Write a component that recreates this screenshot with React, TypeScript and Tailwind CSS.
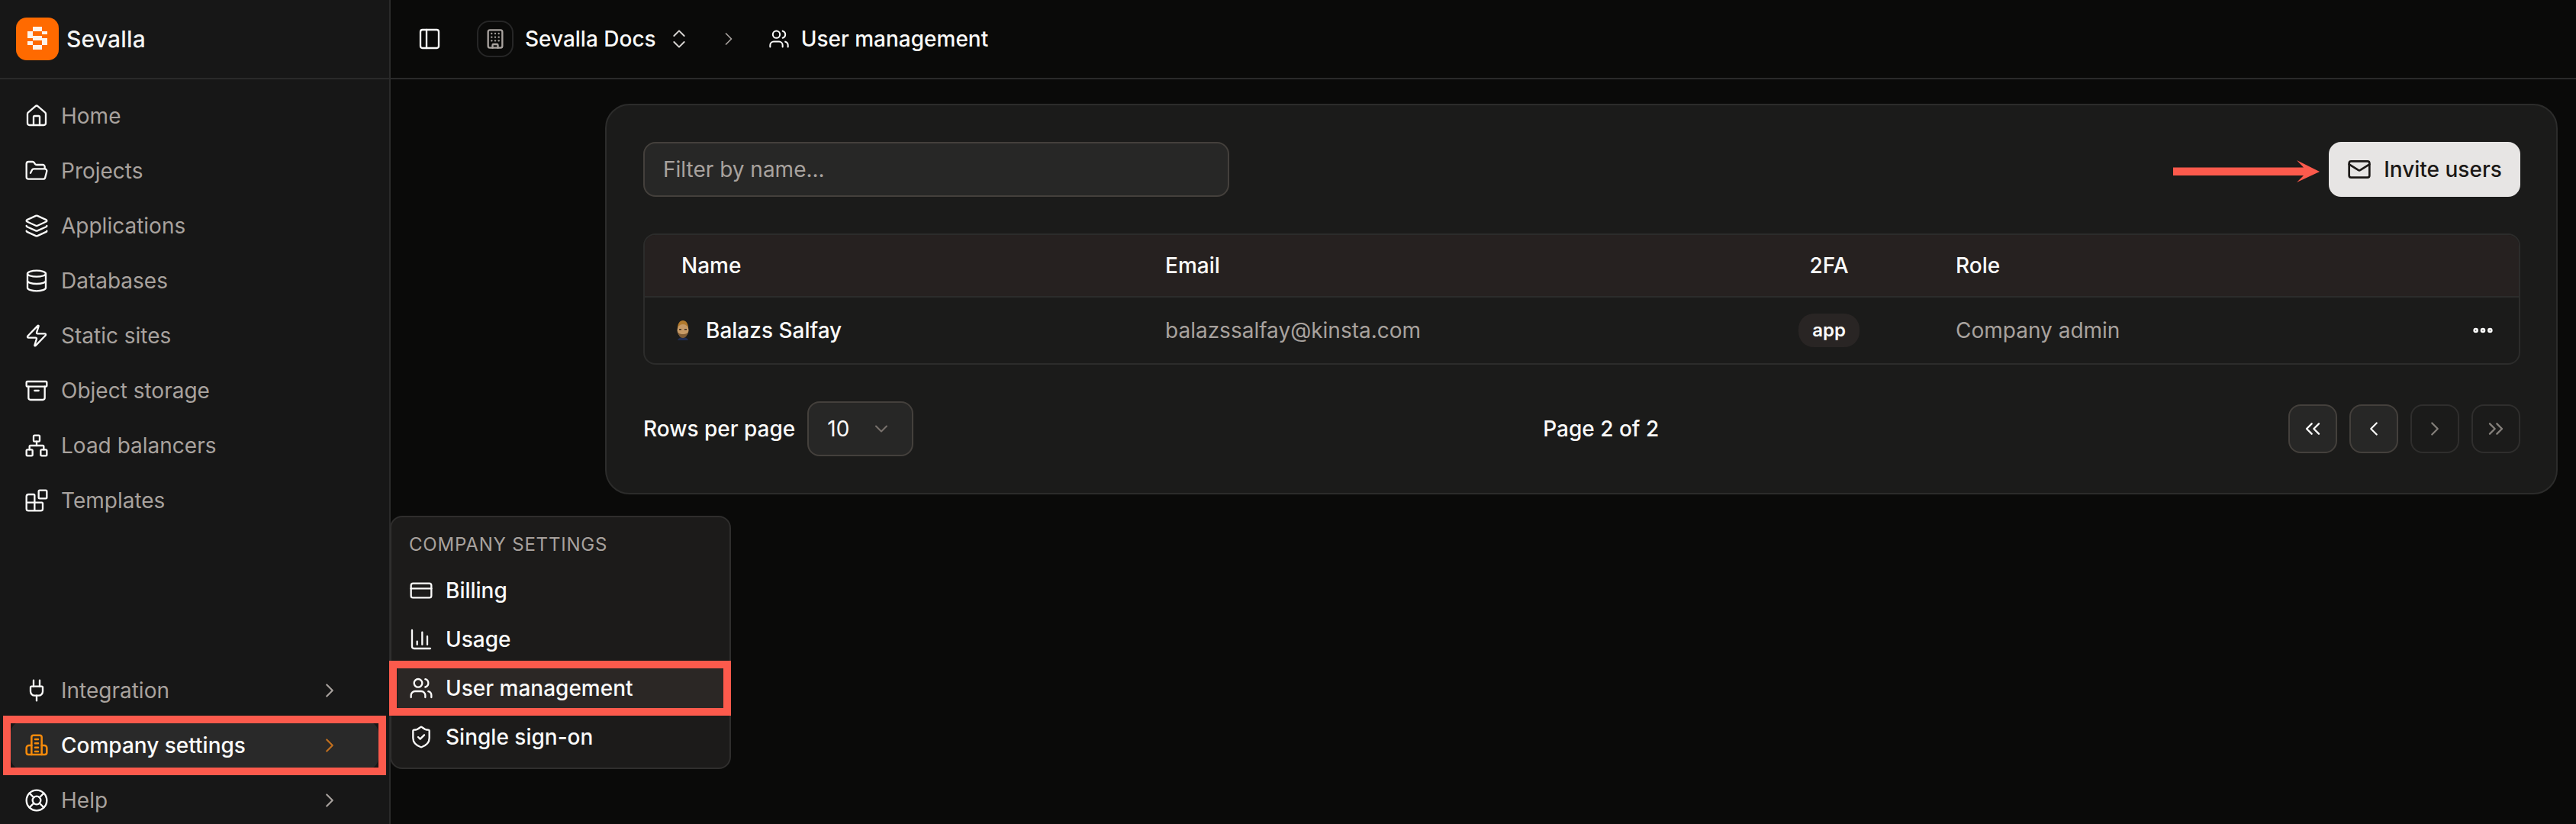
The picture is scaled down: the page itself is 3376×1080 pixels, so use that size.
import {
  Archive,
  Blocks,
  Building,
  ChartColumn,
  ChevronDown,
  ChevronLeft,
  ChevronRight,
  ChevronsLeft,
  ChevronsRight,
  ChevronsUpDown,
  CreditCard,
  Database,
  Ellipsis,
  FolderOpen,
  House,
  Layers,
  LifeBuoy,
  Mail,
  Network,
  PanelLeft,
  Plug,
  ShieldCheck,
  Users,
  Zap,
} from "lucide-react"

const mainNav = [
  { label: "Home", icon: House },
  { label: "Projects", icon: FolderOpen },
  { label: "Applications", icon: Layers },
  { label: "Databases", icon: Database },
  { label: "Static sites", icon: Zap },
  { label: "Object storage", icon: Archive },
  { label: "Load balancers", icon: Network },
  { label: "Templates", icon: Blocks },
]

const settingsMenu = [
  { label: "Billing", icon: CreditCard },
  { label: "Usage", icon: ChartColumn },
  { label: "User management", icon: Users, active: true },
  { label: "Single sign-on", icon: ShieldCheck },
]

function SevallaLogo() {
  return (
    <div className="flex h-[56px] w-[56px] items-center justify-center rounded-[14px] bg-[#ff6a00]">
      <svg width="56" height="56" viewBox="0 0 56 56" fill="#fdf3ea">
        <rect x="22" y="12" width="12" height="6" />
        <rect x="15" y="18" width="7" height="6" />
        <rect x="34" y="18" width="7" height="4" />
        <rect x="15" y="24" width="19" height="3" />
        <rect x="22" y="27" width="19" height="3" />
        <rect x="34" y="30" width="7" height="6" />
        <rect x="15" y="31" width="7" height="5" />
        <rect x="22" y="36" width="12" height="6" />
      </svg>
    </div>
  )
}

function CompanyIcon() {
  return (
    <svg width="32" height="32" viewBox="0 0 24 24" fill="none" stroke="#f58a0b" strokeWidth="1.9" strokeLinecap="round" strokeLinejoin="round">
      <path d="M7 21V4a2 2 0 0 1 2-2h6a2 2 0 0 1 2 2v17" />
      <path d="M7 12H4.5A2.5 2.5 0 0 0 2 14.5V19a2 2 0 0 0 2 2h16a2 2 0 0 0 2-2v-4.5a2.5 2.5 0 0 0-2.5-2.5H17" />
      <path d="M10.5 6h3M10.5 10h3M10.5 14h3M10.5 18h3" />
    </svg>
  )
}

function Avatar() {
  return (
    <svg width="22" height="28" viewBox="0 0 22 28">
      <path d="M4 27c1-3 4-4 7-4s6 1 7 4z" fill="#1e2c52" />
      <path d="M4 11c0-6 3-10 7-10s7 4 7 10z" fill="#b27a2c" />
      <ellipse cx="11" cy="14" rx="7.5" ry="8" fill="#c69a66" />
      <path d="M4 15c1 5 3 9 7 9s6-4 7-9c-1 3-3 4-7 4s-6-1-7-4z" fill="#7f5c35" />
      <rect x="6" y="12" width="3" height="1.5" fill="#3a2a1c" />
      <rect x="13" y="12" width="3" height="1.5" fill="#3a2a1c" />
    </svg>
  )
}

function Sidebar() {
  return (
    <aside className="flex w-[512px] shrink-0 flex-col border-r-2 border-[#2a2a2a] bg-[#171717]">
      <div className="flex h-[104px] shrink-0 items-center gap-[10px] border-b-2 border-[#2a2a2a] pl-[21px]">
        <SevallaLogo />
        <span className="text-[30px] font-medium tracking-[0.2px] text-[#f5f5f4]">Sevalla</span>
      </div>

      <nav className="flex flex-col gap-[8px] px-[14px] pt-[16px]">
        {mainNav.map((item) => (
          <div key={item.label} className="flex h-[64px] items-center gap-[16px] pl-[18px] text-[28px] text-[#a8a29e]">
            <item.icon size={32} strokeWidth={1.75} className="text-[#fafaf9]" />
            {item.label}
          </div>
        ))}
      </nav>

      <div className="mt-[185px] flex flex-col gap-[8px] px-[14px]">
        <div className="flex h-[64px] items-center gap-[16px] pl-[18px] text-[28px] text-[#a8a29e]">
          <Plug size={32} strokeWidth={1.75} className="text-[#fafaf9]" />
          Integration
          <ChevronRight size={30} strokeWidth={1.75} className="ml-auto mr-[49px] text-[#a8a29e]" />
        </div>

        <div className="relative flex h-[64px] items-center gap-[16px] rounded-[16px] bg-[#292929] pl-[18px] text-[28px] font-medium text-[#fafaf9]">
          <CompanyIcon />
          Company settings
          <ChevronRight size={30} strokeWidth={1.75} className="ml-auto mr-[49px] text-[#c2701f]" />
          {/* annotation around the item */}
          <div className="absolute -bottom-[7px] -left-[10px] -right-[10px] -top-[7px] border-[10px] border-[#fc5a4c]" />
        </div>

        <div className="flex h-[64px] items-center gap-[16px] pl-[18px] text-[28px] text-[#a8a29e]">
          <LifeBuoy size={32} strokeWidth={1.75} className="text-[#fafaf9]" />
          Help
          <ChevronRight size={30} strokeWidth={1.75} className="ml-auto mr-[49px] text-[#a8a29e]" />
        </div>
      </div>
    </aside>
  )
}

function TopBar() {
  return (
    <header className="flex h-[104px] shrink-0 items-center border-b-2 border-[#2a2a2a] pl-[35px] text-[28px] font-medium text-[#fafaf9]">
      <PanelLeft size={32} strokeWidth={1.75} />
      <div className="ml-[46px] flex h-[48px] w-[48px] items-center justify-center rounded-[16px] border-2 border-[#262626]">
        <Building size={28} strokeWidth={2} className="text-[#a8a29e]" />
      </div>
      <span className="ml-[15px]">Sevalla Docs</span>
      <ChevronsUpDown size={32} strokeWidth={1.5} className="ml-[14px] text-[#d6d3d1]" />
      <ChevronRight size={28} strokeWidth={1.5} className="ml-[35px] text-[#a8a29e]" />
      <Users size={28} strokeWidth={1.75} className="ml-[38px]" />
      <span className="ml-[15px]">User management</span>
    </header>
  )
}

const rowGrid = "grid grid-cols-[682px_830px_80px_1fr_84px] items-center"

function UsersCard() {
  return (
    <section className="rounded-[32px] border-2 border-[#2c2c2b] bg-[#1b1b1a] py-[48px] pl-[48px] pr-[47px]">
      <div className="flex items-center justify-between">
        <div className="flex h-[72px] w-[768px] items-center rounded-[16px] border-2 border-[#44403c] bg-[#272726] pl-[24px] text-[28px] text-[#a8a29e]">
          Filter by name...
        </div>
        <div className="flex items-center gap-[12px]">
          <svg width="192" height="30" viewBox="0 0 192 30" className="mt-[6px]" fill="#fc5a4c">
            <path d="M0 9.5H171L162 0L192 15L162 29L171 20H0Z" />
          </svg>
          <button className="flex h-[72px] w-[251px] items-center justify-center gap-[16px] rounded-[16px] bg-[#e7e5e4] text-[28px] font-medium text-[#1c1917]">
            <Mail size={32} strokeWidth={2} />
            Invite users
          </button>
        </div>
      </div>

      <div className="mt-[48px] overflow-hidden rounded-[16px] border-2 border-[#2c2c2b] text-[28px]">
        <div className={`${rowGrid} h-[82px] border-b-2 border-[#2c2c2b] bg-[#262120] font-medium text-[#fafaf9]`}>
          <div className="pl-[48px]">Name</div>
          <div>Email</div>
          <div className="text-center">2FA</div>
          <div className="pl-[126px]">Role</div>
          <div />
        </div>
        <div className={`${rowGrid} h-[86px]`}>
          <div className="flex items-center gap-[19px] pl-[39px] font-medium text-[#fafaf9]">
            <Avatar />
            Balazs Salfay
          </div>
          <div className="text-[#a8a29e]">balazssalfay@kinsta.com</div>
          <div className="flex h-[44px] items-center justify-center rounded-[20px] bg-[#292524] text-[24px] font-semibold text-[#fafaf9]">
            app
          </div>
          <div className="pl-[126px] text-[#a8a29e]">Company admin</div>
          <div className="flex justify-end pr-[31px] text-[#fafaf9]">
            <Ellipsis size={32} strokeWidth={3} />
          </div>
        </div>
      </div>

      <div className="mt-[48px] flex items-center justify-between text-[28px] font-medium text-[#fafaf9]">
        <div className="flex items-center gap-[16px]">
          Rows per page
          <div className="flex h-[72px] w-[139px] items-center rounded-[16px] border-2 border-[#44403c] bg-[#272726] pl-[24px]">
            <span className="font-normal">10</span>
            <ChevronDown size={28} strokeWidth={1.75} className="ml-[28px] text-[#78716c]" />
          </div>
        </div>
        <div>Page 2 of 2</div>
        <div className="flex gap-[16px]">
          <div className="flex h-[64px] w-[64px] items-center justify-center rounded-[16px] border-2 border-[#44403c] bg-[#272726]">
            <ChevronsLeft size={32} strokeWidth={1.75} />
          </div>
          <div className="flex h-[64px] w-[64px] items-center justify-center rounded-[16px] border-2 border-[#44403c] bg-[#272726]">
            <ChevronLeft size={30} strokeWidth={1.75} />
          </div>
          <div className="flex h-[64px] w-[64px] items-center justify-center rounded-[16px] border-2 border-[#2f2e2d] text-[#85807b]">
            <ChevronRight size={30} strokeWidth={1.75} />
          </div>
          <div className="flex h-[64px] w-[64px] items-center justify-center rounded-[16px] border-2 border-[#2f2e2d] text-[#85807b]">
            <ChevronsRight size={32} strokeWidth={1.75} />
          </div>
        </div>
      </div>
    </section>
  )
}

function SettingsPopup() {
  return (
    <div className="absolute left-[511px] top-[676px] w-[447px] rounded-[16px] border-2 border-[#2f2e2d] bg-[#1c1b1a] p-[8px]">
      <div className="flex h-[56px] items-center pl-[15px] text-[24px] tracking-[0.8px] text-[#a8a29e]">COMPANY SETTINGS</div>
      {settingsMenu.map((item) => (
        <div
          key={item.label}
          className={`relative flex h-[64px] items-center gap-[16px] pl-[15px] text-[28px] font-medium text-[#fafaf9] ${item.active ? "bg-[#2b2725]" : ""}`}
        >
          <item.icon size={32} strokeWidth={1.75} />
          {item.label}
          {item.active && (
            <div className="absolute -bottom-[4px] -left-[11px] -right-[10px] -top-[4px] border-[10px] border-[#fc5a4c]" />
          )}
        </div>
      ))}
    </div>
  )
}

export default function App() {
  return (
    <div className="relative flex h-[1080px] w-[3376px] overflow-hidden bg-[#0a0a09] font-[Inter,sans-serif]">
      <Sidebar />
      <main className="flex min-w-0 flex-1 flex-col">
        <TopBar />
        <div className="pl-[281px] pr-[24px] pt-[32px]">
          <UsersCard />
        </div>
      </main>
      <SettingsPopup />
    </div>
  )
}
